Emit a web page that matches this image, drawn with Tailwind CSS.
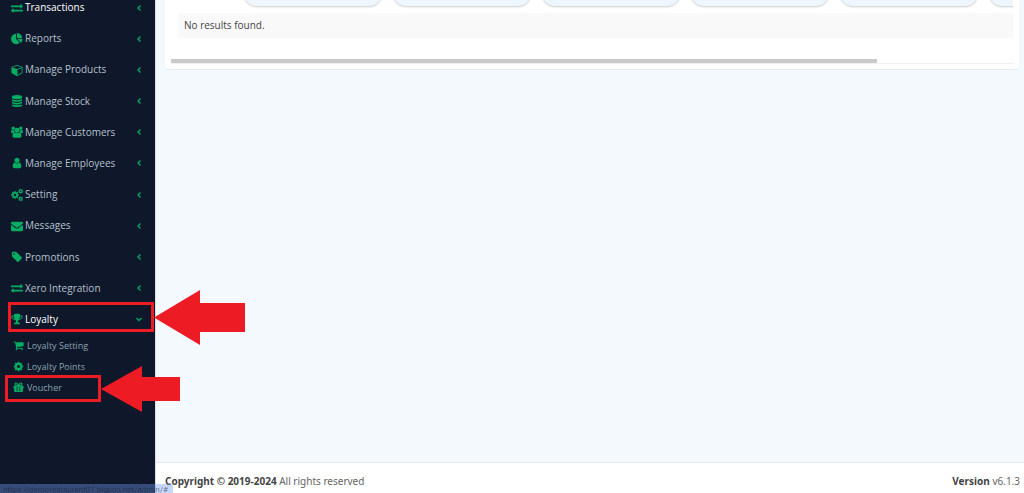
<!DOCTYPE html>
<html lang="en">
  <head>
    <meta charset="UTF-8" />
    <meta name="viewport" content="width=device-width, initial-scale=1.0" />
    <title>Admin</title>
    <script src="https://cdn.jsdelivr.net/npm/@tailwindcss/browser@4"></script>
  </head>
  <body class="relative flex h-screen overflow-hidden bg-[#f4f9fd] font-['Open_Sans','Noto_Sans',sans-serif] text-[10px] text-[#444]">
    <!-- Icon symbols -->
    <svg class="hidden" xmlns="http://www.w3.org/2000/svg">
      <symbol id="exchange" viewBox="0 0 1792 1792"><path d="M1792 1184v192q0 13-9.500 22.500t-22.500 9.500h-1376v192q0 13-9.500 22.500t-22.500 9.500q-12 0-24-10l-319-320q-9-9-9-22 0-14 9-23l320-320q9-9 23-9 13 0 22.500 9.500t9.500 22.500v192h1376q13 0 22.500 9.500t9.500 22.500zm0-544q0 14-9 23l-320 320q-9 9-23 9-13 0-22.500-9.500t-9.500-22.500v-192h-1376q-13 0-22.500-9.500t-9.500-22.500v-192q0-13 9.500-22.500t22.500-9.500h1376v-192q0-14 9-23t23-9q12 0 24 10l319 319q9 9 9 23z" /></symbol>
      <symbol id="pie" viewBox="0 0 1792 1792"><path d="M768 890l546 546q-106 108-247.500 168t-298.500 60q-209 0-385.500-103t-279.500-279.500-103-385.500 103-385.500 279.500-279.500 385.500-103v762zm187 6h773q0 157-60 298.500t-168 247.500zm709-128h-768v-768q209 0 385.500 103t279.500 279.500 103 385.500z" /></symbol>
      <symbol id="cube" viewBox="-64 0 1792 1792"><path d="M896 1629l640-349v-636l-640 233v752zm-64-865l698-254-698-254-698 254zm832-252v768q0 35-18 65t-49 47l-704 384q-28 16-61 16t-61-16l-704-384q-31-17-49-47t-18-65v-768q0-40 23-73t61-47l704-256q22-8 44-8t44 8l704 256q38 14 61 47t23 73z" /></symbol>
      <symbol id="database" viewBox="0 0 1792 1792"><path d="M896 768q237 0 443-43t325-127v170q0 69-103 128t-280 93.500-385 34.500-385-34.500-280-93.500-103-128v-170q119 84 325 127t443 43zm0 768q237 0 443-43t325-127v170q0 69-103 128t-280 93.500-385 34.500-385-34.500-280-93.500-103-128v-170q119 84 325 127t443 43zm0-384q237 0 443-43t325-127v170q0 69-103 128t-280 93.500-385 34.500-385-34.500-280-93.500-103-128v-170q119 84 325 127t443 43zm0-1152q208 0 385 34.500t280 93.500 103 128v128q0 69-103 128t-280 93.500-385 34.500-385-34.500-280-93.500-103-128v-128q0-69 103-128t280-93.500 385-34.500z" /></symbol>
      <symbol id="users" viewBox="0 0 24 24">
        <circle cx="4.500" cy="4.500" r="3.400" /><circle cx="19.500" cy="4.500" r="3.400" />
        <path d="M0 12.500C0 9 1 7.500 2.500 8c2 1 3.500 1 4.800.3C6.500 10 6.500 11.500 7 13c-1.500 0-2.500.6-3 1H2c-1.400 0-2-.6-2-1.500zM24 12.500C24 9 23 7.500 21.500 8c-2 1-3.500 1-4.800.3.800 1.700.8 3.200.3 4.700 1.500 0 2.500.6 3 1h2c1.400 0 2-.6 2-1.500z" />
        <circle cx="12" cy="8.500" r="4.800" />
        <path d="M7 12.500c3 2.300 7 2.300 10 0 3 0 4 4 4 7.500 0 2-1.200 3.500-3.200 3.500H6.200C4.200 23.500 3 22 3 20c0-3.500 1-7.500 4-7.500z" />
      </symbol>
      <symbol id="user" viewBox="0 0 1792 1792"><path d="M1536 1399q0 109-62.500 187t-150.500 78h-854q-88 0-150.500-78t-62.500-187q0-85 8.500-160.500t31.500-152 58.500-131 94-89 134.500-34.500q131 128 313 128t313-128q76 0 134.500 34.500t94 89 58.500 131 31.500 152 8.500 160.500zm-256-887q0 159-112.500 271.500t-271.500 112.500-271.500-112.500-112.500-271.500 112.500-271.500 271.500-112.500 271.500 112.500 112.500 271.500z" /></symbol>
      <symbol id="cog" viewBox="0 0 1792 1792"><path d="M1152 896q0-106-75-181t-181-75-181 75-75 181 75 181 181 75 181-75 75-181zm512-109v222q0 12-8 23t-20 13l-185 28q-19 54-39 91 35 50 107 138 10 12 10 25t-9 23q-27 37-99 108t-94 71q-12 0-26-9l-138-108q-44 23-91 38-16 136-29 186-7 28-36 28h-222q-14 0-24.500-8.500t-11.500-21.500l-28-184q-49-16-90-37l-141 107q-10 9-25 9-14 0-25-11-126-114-165-168-7-10-7-23 0-12 8-23 15-21 51-66.500t54-70.500q-27-50-41-99l-183-27q-13-2-21-12.500t-8-23.500v-222q0-12 8-23t19-13l186-28q14-46 39-92-40-57-107-138-10-12-10-24 0-10 9-23 26-36 98.500-107.500t94.500-71.500q13 0 26 10l138 107q44-23 91-38 16-136 29-186 7-28 36-28h222q14 0 24.500 8.500t11.500 21.500l28 184q49 16 90 37l142-107q9-9 24-9 13 0 25 10 129 119 165 170 7 8 7 22 0 12-8 23-15 21-51 66.500t-54 70.500q26 50 41 98l183 28q13 2 21 12.500t8 23.500z" /></symbol>
      <symbol id="cogs" viewBox="0 0 24 24">
        <use href="#cog" x="-1" y="3" width="18" height="18" />
        <use href="#cog" x="14" y="-1" width="11" height="11" />
        <use href="#cog" x="14" y="14" width="11" height="11" />
      </symbol>
      <symbol id="envelope" viewBox="0 0 1792 1792"><path d="M1792 710v794q0 66-47 113t-113 47h-1472q-66 0-113-47t-47-113v-794q44 49 101 87 362 246 497 345 57 42 92.500 65.500t94.500 48 110 24.500h2q51 0 110-24.500t94.500-48 92.500-65.500q170-123 498-345 57-39 100-87zm0-294q0 79-49 151t-122 123q-376 261-468 325-10 7-42.500 31t-54 38.500-52 32.500-57.500 27-50 9h-2q-23 0-50-9t-57.500-27-52-32.500-54-38.500-42.500-31q-91-64-262-182.500t-205-142.500q-62-42-117-115.500t-55-136.500q0-78 41.500-130t118.500-52h1472q65 0 112.500 47t47.500 113z" /></symbol>
      <symbol id="tag" viewBox="0 0 1792 1792"><path d="M576 448q0-53-37.500-90.500t-90.500-37.500-90.500 37.500-37.500 90.500 37.500 90.500 90.500 37.500 90.500-37.500 37.500-90.500zm1067 576q0 53-37 90l-491 492q-39 37-91 37-53 0-90-37l-715-716q-38-37-64.500-101t-26.500-117v-416q0-52 38-90t90-38h416q53 0 117 26.500t102 64.500l715 714q37 39 37 91z" /></symbol>
      <symbol id="trophy" viewBox="0 0 1792 1792"><path d="M522 883q-74-162-74-371h-256v96q0 78 94.500 162t235.500 113zm1078-275v-96h-256q0 209-74 371 141-29 235.500-113t94.500-162zm128-128v128q0 71-41.500 143t-112 130-173 97.500-215.500 44.500q-42 54-95 95-38 34-52.500 72.500t-14.500 89.500q0 54 30.500 91t97.500 37q75 0 133.500 45.500t58.500 114.500v64q0 14-9 23t-23 9h-832q-14 0-23-9t-9-23v-64q0-69 58.500-114.500t133.500-45.500q67 0 97.500-37t30.500-91q0-51-14.500-89.500t-52.500-72.500q-53-41-95-95-113-5-215.500-44.500t-173-97.500-112-130-41.500-143v-128q0-40 28-68t68-28h288v-96q0-66 47-113t113-47h576q66 0 113 47t47 113v96h288q40 0 68 28t28 68z" /></symbol>
      <symbol id="cart" viewBox="0 0 1792 1792"><path d="M704 1536q0 52-38 90t-90 38-90-38-38-90 38-90 90-38 90 38 38 90zm896 0q0 52-38 90t-90 38-90-38-38-90 38-90 90-38 90 38 38 90zm128-1088v512q0 24-16.500 42.500t-40.500 21.500l-1044 122q13 60 13 70 0 16-24 64h920q26 0 45 19t19 45-19 45-45 19h-1024q-26 0-45-19t-19-45q0-11 8-31.500t16-36 21.500-40 15.500-29.500l-177-823h-204q-26 0-45-19t-19-45 19-45 45-19h256q16 0 28.500 6.500t19.500 15.500 13 24.500 8 26 5.500 29.500 4.500 26h1201q26 0 45 19t19 45z" /></symbol>
      <symbol id="gift" viewBox="0 0 24 24">
        <path fill-rule="evenodd" d="M2 8h5.500C4.700 8 3 6.700 3 4.600S4.600 1 7 1c1.500 0 2.400.6 3.100 1.600L12 5l1.900-2.400C14.600 1.600 15.500 1 17 1c2.400 0 4 1.500 4 3.600S19.300 8 16.500 8H22c.6 0 1 .4 1 1v5h-1.500v6.500c0 .9-.6 1.500-1.500 1.500H4c-.9 0-1.500-.6-1.500-1.500V14H1V9c0-.6.400-1 1-1zM7 3.200c-1 0-1.600.6-1.600 1.400S6 6 7 6h3L8.300 3.800C8 3.400 7.600 3.200 7 3.200zm10 0c-.6 0-1 .2-1.300.6L14 6h3c1 0 1.600-.6 1.600-1.400S18 3.200 17 3.200zM8.200 9v11h1.600V9zm6 0v11h1.600V9z" />
      </symbol>
      <symbol id="left" viewBox="0 0 8 8"><path d="M5.500 1.500L3 4l2.500 2.500" fill="none" stroke="currentColor" stroke-width="1.300" /></symbol>
      <symbol id="down" viewBox="0 0 8 8"><path d="M1.500 3L4 5.500 6.500 3" fill="none" stroke="currentColor" stroke-width="1.300" /></symbol>
    </svg>

    <!-- Sidebar -->
    <aside class="w-[155px] shrink-0 bg-[#0f172a] text-[#b4c1ca]">
      <nav>
        <ul class="-mt-2 grid h-[343px] auto-rows-fr [&_a]:flex [&_a]:h-full [&_a]:items-center [&_a]:pl-[11px] [&_a]:pr-3 [&_span]:ml-[2px] [&_span]:grow [&_span]:whitespace-nowrap [&_svg]:fill-current [&_svg]:text-[#04ad62]">
          <li><a href="#" class="text-white"><svg class="size-3"><use href="#exchange" /></svg><span>Transactions</span><svg class="size-2"><use href="#left" /></svg></a></li>
          <li><a href="#"><svg class="size-3"><use href="#pie" /></svg><span>Reports</span><svg class="size-2"><use href="#left" /></svg></a></li>
          <li><a href="#"><svg class="size-3"><use href="#cube" /></svg><span>Manage Products</span><svg class="size-2"><use href="#left" /></svg></a></li>
          <li><a href="#"><svg class="size-3"><use href="#database" /></svg><span>Manage Stock</span><svg class="size-2"><use href="#left" /></svg></a></li>
          <li><a href="#"><svg class="size-3"><use href="#users" /></svg><span>Manage Customers</span><svg class="size-2"><use href="#left" /></svg></a></li>
          <li><a href="#"><svg class="size-3"><use href="#user" /></svg><span>Manage Employees</span><svg class="size-2"><use href="#left" /></svg></a></li>
          <li><a href="#"><svg class="size-3"><use href="#cogs" /></svg><span>Setting</span><svg class="size-2"><use href="#left" /></svg></a></li>
          <li><a href="#"><svg class="size-3"><use href="#envelope" /></svg><span>Messages</span><svg class="size-2"><use href="#left" /></svg></a></li>
          <li><a href="#"><svg class="size-3"><use href="#tag" /></svg><span>Promotions</span><svg class="size-2"><use href="#left" /></svg></a></li>
          <li><a href="#"><svg class="size-3"><use href="#exchange" /></svg><span>Xero Integration</span><svg class="size-2"><use href="#left" /></svg></a></li>
          <li><a href="#" class="text-white"><svg class="size-3"><use href="#trophy" /></svg><span>Loyalty</span><svg class="size-2"><use href="#down" /></svg></a></li>
        </ul>
        <ul class="text-[9px] text-[#8aa4af] [&_a]:flex [&_a]:h-[21px] [&_a]:items-center [&_a]:gap-[3px] [&_a]:pl-[13px] [&_svg]:fill-[#04ad62]">
          <li><a href="#"><svg class="size-[11px]"><use href="#cart" /></svg>Loyalty Setting</a></li>
          <li><a href="#"><svg class="size-[11px]"><use href="#cog" /></svg>Loyalty Points</a></li>
          <li><a href="#"><svg class="size-[11px]"><use href="#gift" /></svg>Voucher</a></li>
        </ul>
      </nav>
    </aside>

    <div class="flex min-w-0 grow flex-col border-l border-[#d9dfe6]">
      <main class="grow pl-[9px] pr-[5px]">
        <div class="rounded-b-[3px] bg-white px-[6px] pb-[6px] shadow-[0_1px_1px_rgba(0,0,0,0.06)]">
          <div class="overflow-hidden shadow-[0_1px_1px_rgba(0,0,0,0.06)]">
            <div class="overflow-hidden pl-[7px]">
              <table class="-mt-5 w-[960px] table-fixed">
                <thead>
                  <tr class="h-[33px] align-top [&_input]:h-[26px] [&_input]:w-[138px] [&_input]:rounded-[13px] [&_input]:bg-[#eef6ff] [&_input]:shadow-[0_1px_2px_rgba(0,0,0,0.2)]">
                    <th class="w-[66px]"></th>
                    <th class="w-[149px] text-left"><input type="text" aria-label="Filter column 1" /></th>
                    <th class="w-[149px] text-left"><input type="text" aria-label="Filter column 2" /></th>
                    <th class="w-[149px] text-left"><input type="text" aria-label="Filter column 3" /></th>
                    <th class="w-[149px] text-left"><input type="text" aria-label="Filter column 4" /></th>
                    <th class="w-[149px] text-left"><input type="text" aria-label="Filter column 5" /></th>
                    <th class="w-[149px] text-left"><input type="text" aria-label="Filter column 6" /></th>
                  </tr>
                </thead>
                <tbody>
                  <tr class="h-[25px] bg-[#f9f9f9]"><td colspan="7" class="px-[6px] text-[#444]">No results found.</td></tr>
                </tbody>
              </table>
            </div>
            <!-- Horizontal scroll thumb -->
            <div class="mt-[21px] h-1 bg-[#c9c9c9]" style="width: 83.8%"></div>
          </div>
        </div>
      </main>

      <footer class="flex h-[31px] items-center justify-between border-t border-[#e3e7eb] bg-white pl-[9px] pr-1 pt-[6px]">
        <p class="font-['Noto_Sans',sans-serif] text-[#666]"><strong class="text-[#444]">Copyright © 2019-2024</strong> All rights reserved</p>
        <p class="font-['Noto_Sans',sans-serif] text-[#666]"><b class="text-[#444]">Version</b> v6.1.3</p>
      </footer>
    </div>

    <!-- Link address bubble -->
    <div class="absolute bottom-0 left-0 h-[9px] w-[173px] overflow-hidden rounded-tr-[2px] bg-[#6f9bf0]/40 pl-[3px] font-['Roboto',sans-serif] text-[8px] leading-[12px] whitespace-nowrap text-[#1c2433]/60">https://demorestaurant07.bigpos.net/admin/#</div>

    <!-- Callouts -->
    <div class="absolute top-[302px] left-[8px] h-[30px] w-[146px] border-[3px] border-[#ed1c24]"></div>
    <svg class="absolute top-[290px] left-[154px] h-[55px] w-[91px]" viewBox="0 0 91 55" fill="#ed1c24"><path d="M0 27.500L46 0v13h45v29H46v13z" /></svg>
    <div class="absolute top-[375px] left-[5px] h-[27px] w-[96px] border-[3px] border-[#ed1c24]"></div>
    <svg class="absolute top-[366px] left-[101px] h-[46px] w-[79px]" viewBox="0 0 79 46" fill="#ed1c24"><path d="M0 23L41 0v11h38v24H41v11z" /></svg>
  </body>
</html>
